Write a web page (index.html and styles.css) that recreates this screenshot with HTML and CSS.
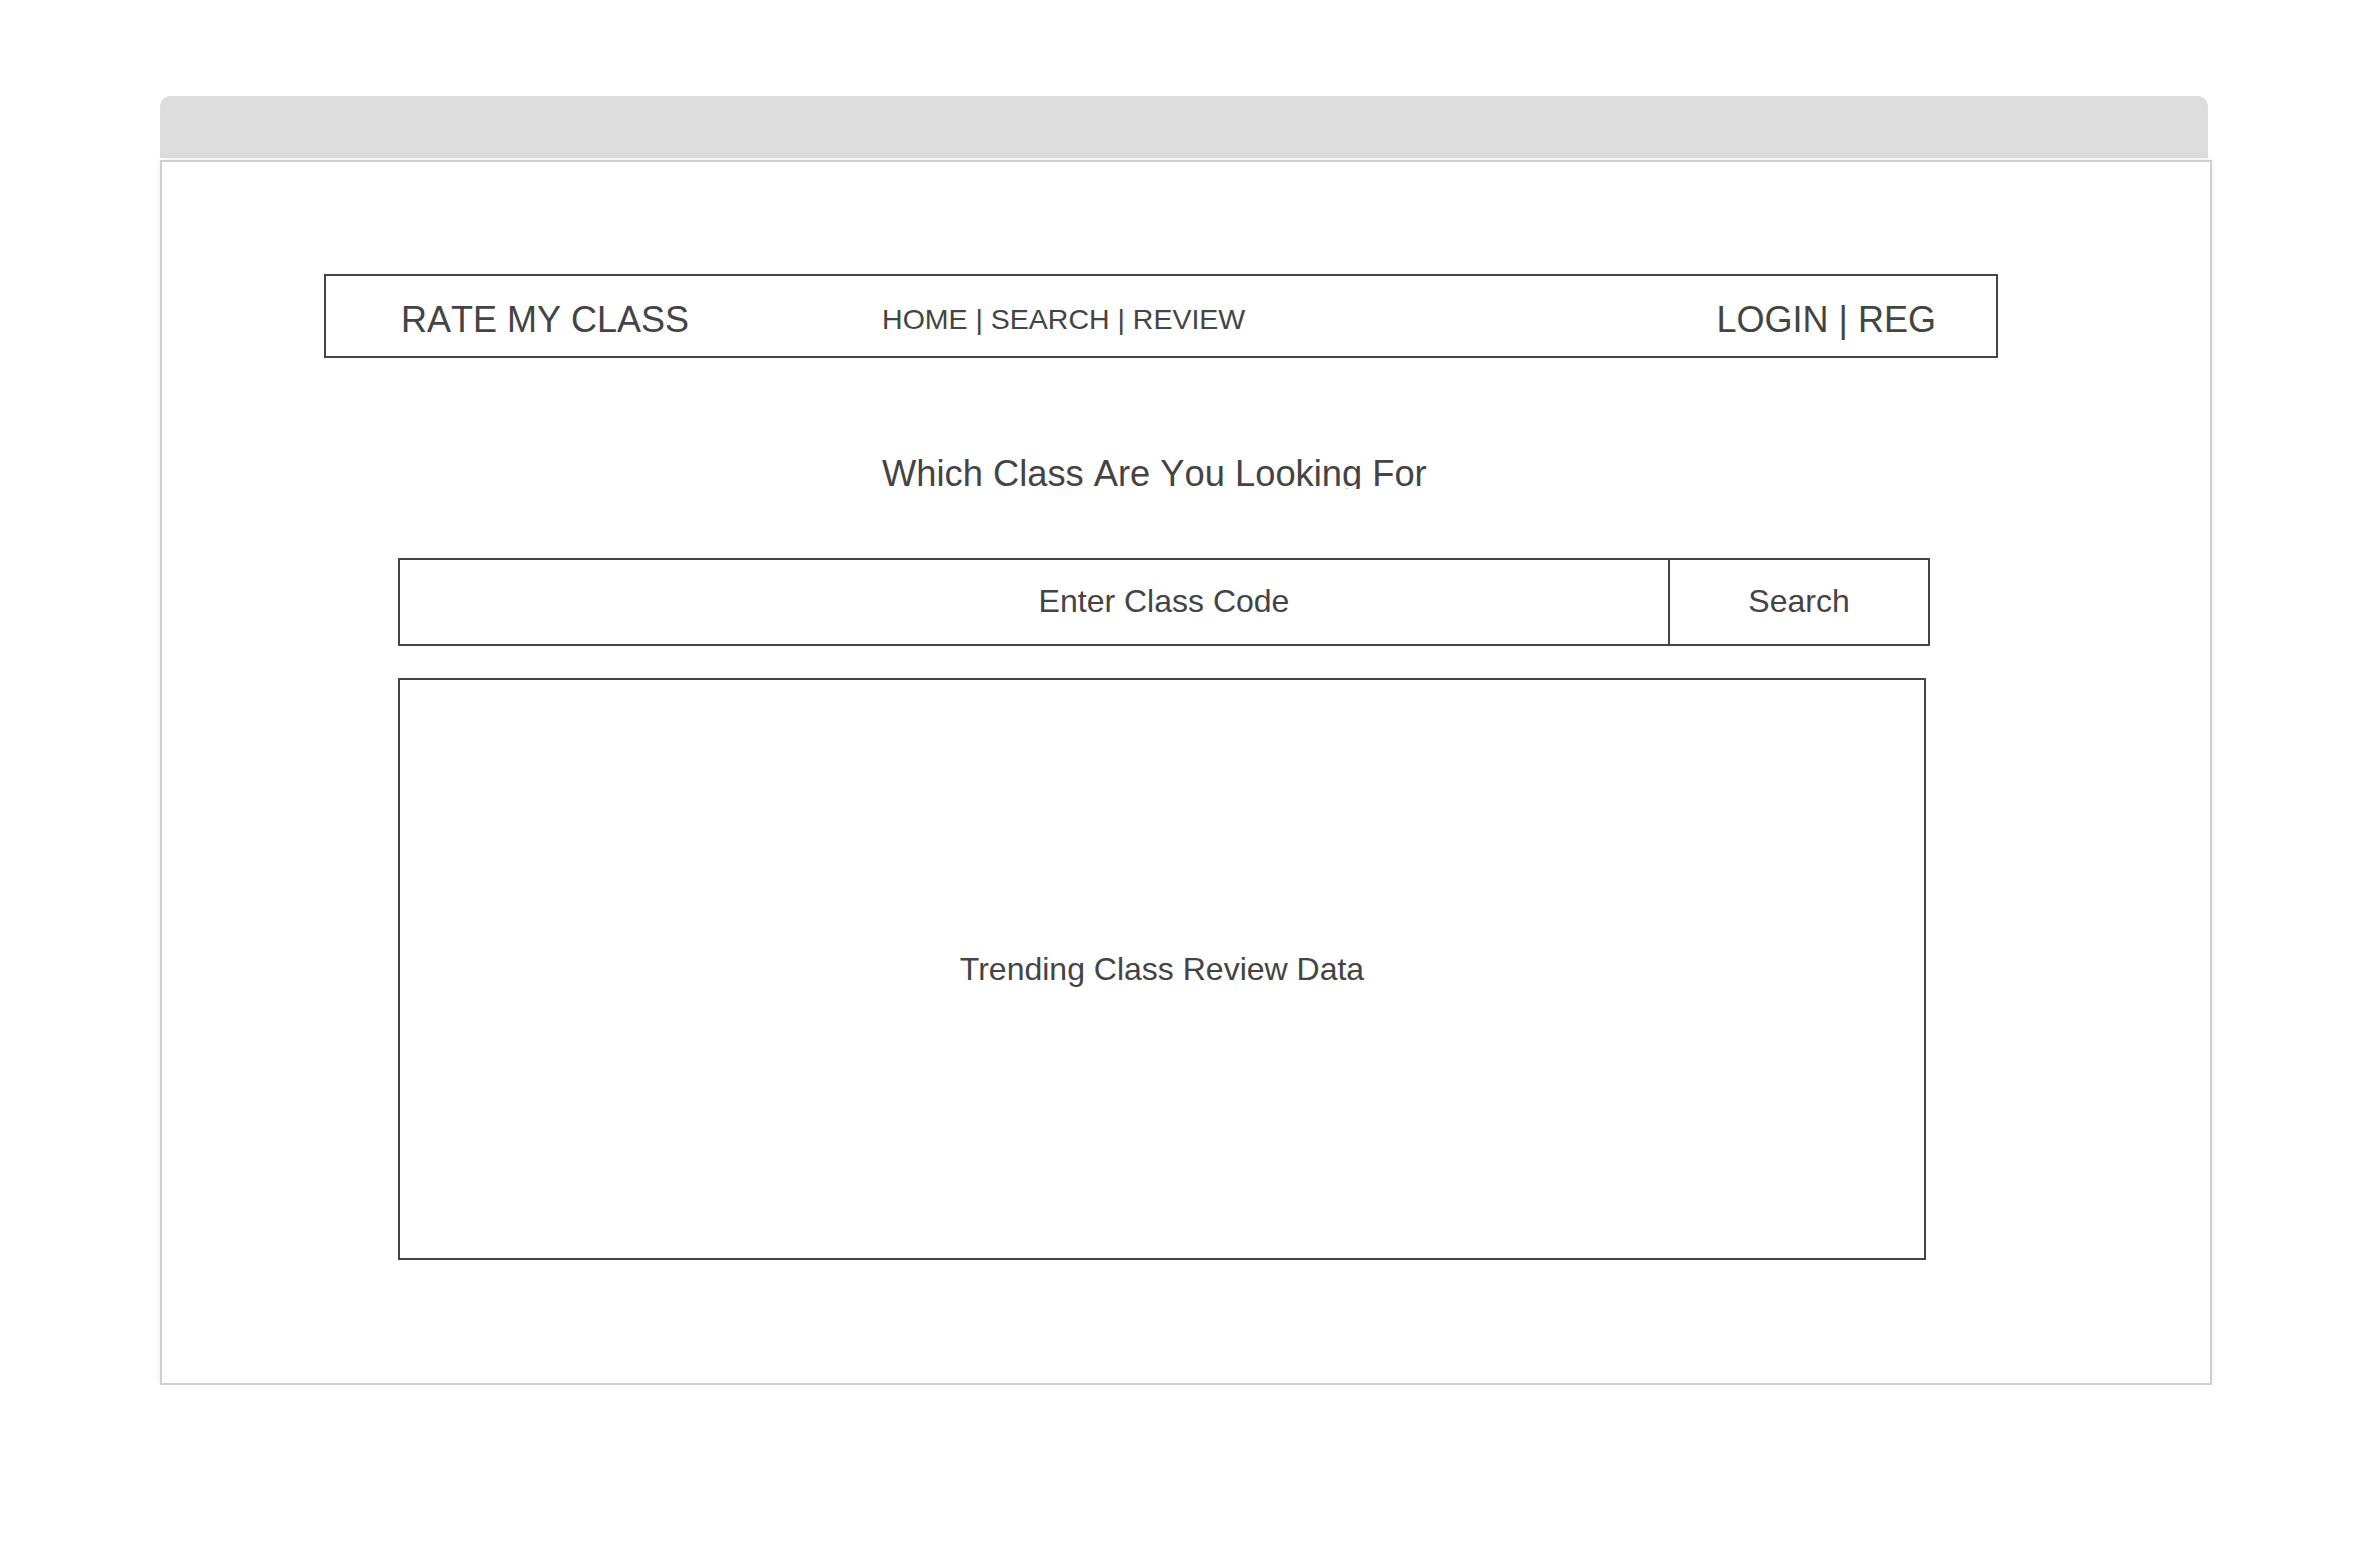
FILE: index.html
```html
<!DOCTYPE html>
<html>
<head>
<meta charset="utf-8">
<title>Rate My Class</title>
<link rel="stylesheet" href="styles.css">
</head>
<body>
<div class="page">
  <div class="window">
    <div class="titlebar"></div>
    <div class="frame">
      <div class="nav">
        <div class="brand">RATE MY CLASS</div>
        <div class="links">HOME | SEARCH | REVIEW</div>
        <div class="auth">LOGIN | REG</div>
      </div>
      <div class="heading">Which Class Are You Looking For</div>
      <div class="search-row">
        <div class="search-input">Enter Class Code</div>
        <div class="search-btn">Search</div>
      </div>
      <div class="trending">Trending Class Review Data</div>
    </div>
  </div>
</div>
</body>
</html>
```
FILE: styles.css
```css
html, body {
  margin: 0;
  padding: 0;
  background: #ffffff;
}
body {
  font-family: "Liberation Sans", Arial, sans-serif;
  color: #444444;
}
.page {
  padding: 96px 0 0 160px;
}
.window {
  width: 2052px;
}
.titlebar {
  width: 2048px;
  height: 62px;
  background: #dddddd;
  border-radius: 10px 10px 0 0;
  margin-bottom: 2px;
}
.frame {
  box-sizing: border-box;
  height: 1225px;
  border: 2px solid #cfcfcf;
  box-shadow: 0 0 8px rgba(0, 0, 0, 0.07);
  padding: 112px 0 0 162px;
}
.nav {
  box-sizing: border-box;
  width: 1674px;
  height: 84px;
  border: 2px solid #444444;
  display: flex;
  align-items: center;
  padding: 8px 60px 0 75px;
  font-kerning: none;
}
.brand {
  font-size: 36px;
  line-height: 40px;
}
.links {
  font-size: 28.5px;
  line-height: 40px;
  margin-left: 193px;
  margin-top: -2px;
}
.auth {
  font-size: 36px;
  line-height: 40px;
  margin-left: auto;
}
.heading {
  font-size: 36.3px;
  line-height: 44px;
  height: 37px;
  overflow: hidden;
  margin: 94px 0 0 558px;
  white-space: nowrap;
  font-kerning: none;
}
.search-row {
  box-sizing: border-box;
  width: 1532px;
  height: 88px;
  margin: 69px 0 0 74px;
  border: 2px solid #444444;
  display: flex;
  font-size: 32px;
}
.search-input {
  flex: 1;
  display: flex;
  align-items: center;
  justify-content: center;
  padding: 0 0 2px 260px;
}
.search-btn {
  width: 258px;
  border-left: 2px solid #444444;
  display: flex;
  align-items: center;
  justify-content: center;
  padding-bottom: 2px;
}
.trending {
  box-sizing: border-box;
  width: 1528px;
  height: 582px;
  margin: 32px 0 0 74px;
  border: 2px solid #444444;
  display: flex;
  align-items: center;
  justify-content: center;
  font-size: 32px;
}
```
